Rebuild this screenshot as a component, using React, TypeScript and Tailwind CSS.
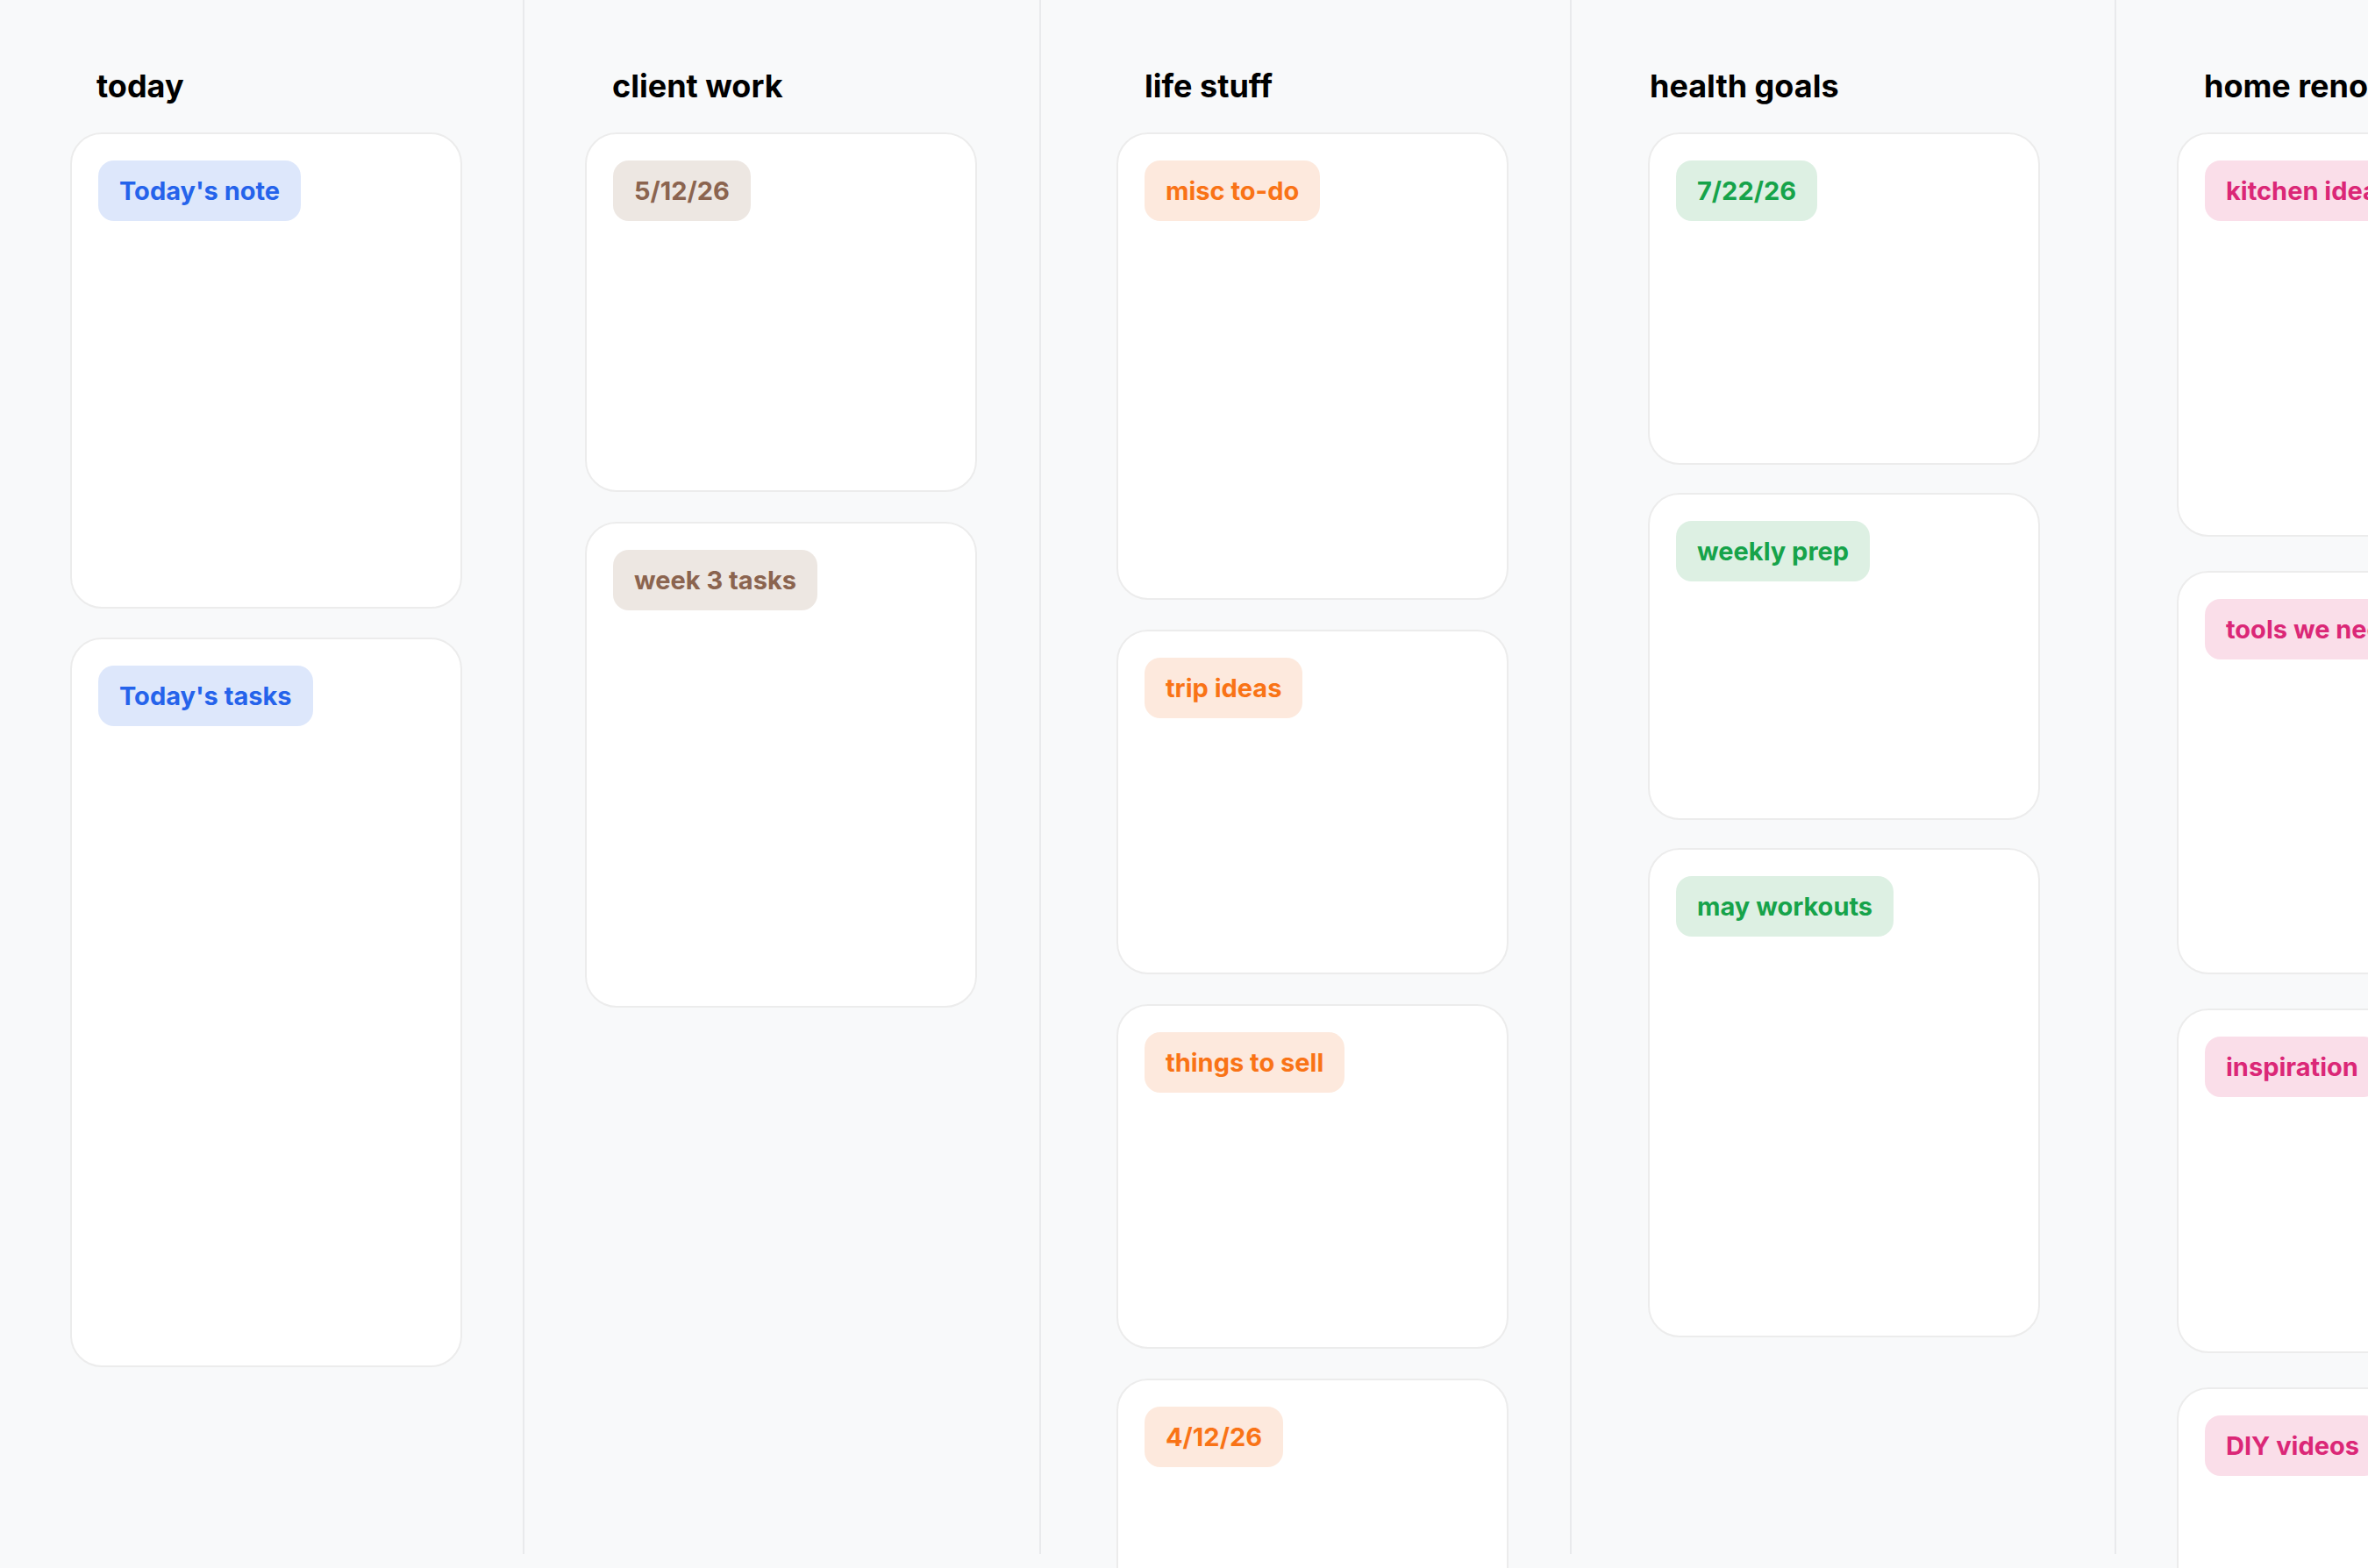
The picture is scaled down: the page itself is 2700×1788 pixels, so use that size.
type Tone = 'blue' | 'brown' | 'orange' | 'green' | 'pink';

type Card = { label: string; h: string };

type Column = {
  title: string;
  tone: Tone;
  width: string;
  padLeft: string;
  headPad: string;
  gap: string;
  cards: Card[];
};

const toneClass: Record<Tone, string> = {
  blue: 'bg-[#dde7fb] text-[#2563eb]',
  brown: 'bg-[#ede7e2] text-[#8b644f]',
  orange: 'bg-[#fde9dd] text-[#f97316]',
  green: 'bg-[#ddf0e3] text-[#16a34a]',
  pink: 'bg-[#fadee9] text-[#db2777]',
};

const columns: Column[] = [
  {
    title: 'today',
    tone: 'blue',
    width: 'w-[598px]',
    padLeft: 'pl-[80px]',
    headPad: 'pl-[30px]',
    gap: 'gap-[33px]',
    cards: [
      { label: "Today's note", h: 'h-[543px]' },
      { label: "Today's tasks", h: 'h-[832px]' },
    ],
  },
  {
    title: 'client work',
    tone: 'brown',
    width: 'w-[589px]',
    padLeft: 'pl-[69px]',
    headPad: 'pl-[31px]',
    gap: 'gap-[34px]',
    cards: [
      { label: '5/12/26', h: 'h-[410px]' },
      { label: 'week 3 tasks', h: 'h-[554px]' },
    ],
  },
  {
    title: 'life stuff',
    tone: 'orange',
    width: 'w-[605px]',
    padLeft: 'pl-[86px]',
    headPad: 'pl-[32px]',
    gap: 'gap-[34px]',
    cards: [
      { label: 'misc to-do', h: 'h-[533px]' },
      { label: 'trip ideas', h: 'h-[393px]' },
      { label: 'things to sell', h: 'h-[393px]' },
      { label: '4/12/26', h: 'h-[393px]' },
    ],
  },
  {
    title: 'health goals',
    tone: 'green',
    width: 'w-[621px]',
    padLeft: 'pl-[87px]',
    headPad: 'pl-[2px]',
    gap: 'gap-[32px]',
    cards: [
      { label: '7/22/26', h: 'h-[379px]' },
      { label: 'weekly prep', h: 'h-[373px]' },
      { label: 'may workouts', h: 'h-[558px]' },
    ],
  },
  {
    title: 'home reno',
    tone: 'pink',
    width: 'w-[621px]',
    padLeft: 'pl-[69px]',
    headPad: 'pl-[31px]',
    gap: 'gap-[39px]',
    cards: [
      { label: 'kitchen ideas', h: 'h-[461px]' },
      { label: 'tools we need', h: 'h-[460px]' },
      { label: 'inspiration', h: 'h-[393px]' },
      { label: 'DIY videos', h: 'h-[393px]' },
    ],
  },
];

function NoteCard({ card, tone }: { card: Card; tone: Tone }) {
  return (
    <div
      className={`${card.h} w-[447px] shrink-0 rounded-[36px] border-2 border-[#ececec] bg-white p-[30px] flex flex-col items-start`}
    >
      <span
        className={`${toneClass[tone]} h-[69px] px-6 rounded-[18px] flex items-center text-[29px] font-bold whitespace-nowrap`}
      >
        {card.label}
      </span>
    </div>
  );
}

function BoardColumn({ col }: { col: Column }) {
  return (
    <section
      className={`${col.width} ${col.padLeft} h-[1772px] shrink-0 border-r-2 border-[#e9eaec] pt-[80px] flex flex-col`}
    >
      <h2
        className={`${col.headPad} h-[36px] leading-[36px] text-[36px] font-bold text-black mb-[35px] whitespace-nowrap`}
      >
        {col.title}
      </h2>
      <div className={`flex flex-col ${col.gap}`}>
        {col.cards.map((card) => (
          <NoteCard key={card.label} card={card} tone={col.tone} />
        ))}
      </div>
    </section>
  );
}

export default function App() {
  return (
    <div className="h-screen w-full overflow-hidden bg-[#f8f9fa] font-['Inter','Noto_Sans',sans-serif]">
      <div className="flex h-full">
        {columns.map((col) => (
          <BoardColumn key={col.title} col={col} />
        ))}
      </div>
    </div>
  );
}
